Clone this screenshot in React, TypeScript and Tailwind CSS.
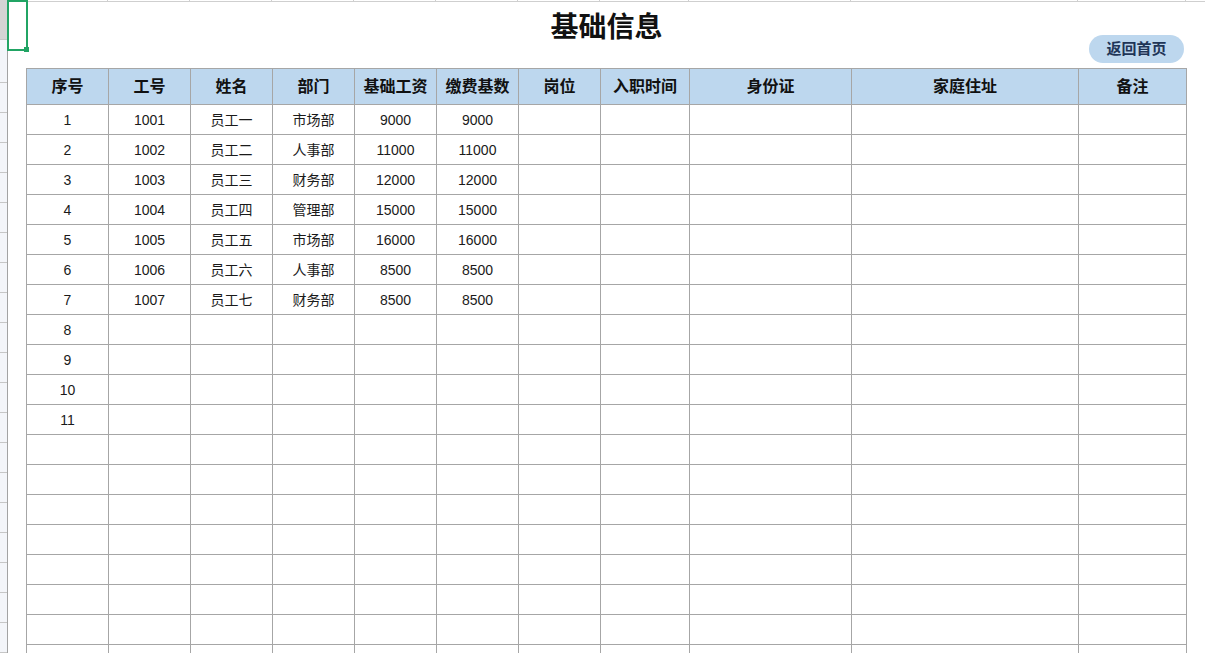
import React from 'react';

const columns = [
  { title: '序号', width: 82 },
  { title: '工号', width: 82 },
  { title: '姓名', width: 82 },
  { title: '部门', width: 82 },
  { title: '基础工资', width: 82 },
  { title: '缴费基数', width: 82 },
  { title: '岗位', width: 82 },
  { title: '入职时间', width: 89 },
  { title: '身份证', width: 162 },
  { title: '家庭住址', width: 227 },
  { title: '备注', width: 108 },
];

const employees = [
  ['1', '1001', '员工一', '市场部', '9000', '9000'],
  ['2', '1002', '员工二', '人事部', '11000', '11000'],
  ['3', '1003', '员工三', '财务部', '12000', '12000'],
  ['4', '1004', '员工四', '管理部', '15000', '15000'],
  ['5', '1005', '员工五', '市场部', '16000', '16000'],
  ['6', '1006', '员工六', '人事部', '8500', '8500'],
  ['7', '1007', '员工七', '财务部', '8500', '8500'],
  ['8'],
  ['9'],
  ['10'],
  ['11'],
];

const TOTAL_ROWS = 19;

const font = { fontFamily: '"Liberation Sans", "Noto Sans CJK SC", sans-serif' };
const gridCols = 'grid grid-cols-[82px_82px_82px_82px_82px_82px_82px_89px_162px_227px_108px]';

function RowHeaders() {
  return (
    <div className="flex w-[8px] shrink-0 flex-col border-r border-[#a3a3a3] bg-[#f3f5f9]">
      <div className="h-[51px] border-b border-[#c6c6c6] bg-[#d4d4d4]" />
      <div className="h-[54px] border-b border-[#c6c6c6]" />
      {Array.from({ length: TOTAL_ROWS }).map((_, i) => (
        <div key={i} className="h-[30px] shrink-0 border-b border-[#c6c6c6]" />
      ))}
    </div>
  );
}

function SheetTicks() {
  return (
    <div className={`${gridCols} h-[2px] border-b border-[#cfcfcf]`}>
      {columns.map((c) => (
        <div key={c.title} className="border-r border-[#cfcfcf]" />
      ))}
    </div>
  );
}

function TitleBar() {
  return (
    <div className="grid h-[66px] grid-cols-[1fr_auto_1fr]">
      <div />
      <h1 className="mt-[12px] self-start text-[28px] font-bold leading-[28px] text-[#111]" style={font}>
        基础信息
      </h1>
      <button
        className="mb-[5px] mr-[3px] h-[28px] w-[95px] self-end justify-self-end rounded-full bg-[#bdd7ee] text-[15px] font-bold text-[#1f3557]"
        style={font}
      >
        返回首页
      </button>
    </div>
  );
}

function DataTable() {
  return (
    <div className="border-l border-t border-[#a6a6a6]" style={font}>
      <div className={`${gridCols} bg-[#bdd7ee]`}>
        {columns.map((c) => (
          <div
            key={c.title}
            className="flex h-[36px] items-center justify-center border-b border-r border-[#a6a6a6] pt-[1px] text-[16px] font-bold text-[#111]"
          >
            {c.title}
          </div>
        ))}
      </div>
      {Array.from({ length: TOTAL_ROWS }).map((_, r) => {
        const row = employees[r] ?? [];
        return (
          <div key={r} className={gridCols}>
            {columns.map((c, i) => (
              <div
                key={c.title}
                className="flex h-[30px] items-center justify-center border-b border-r border-[#a6a6a6] pt-[2px] text-[14px] text-[#1a1a1a]"
              >
                {row[i] ?? ''}
              </div>
            ))}
          </div>
        );
      })}
    </div>
  );
}

export default function App() {
  return (
    <div className="relative flex h-[653px] w-[1205px] overflow-hidden bg-white">
      <RowHeaders />
      <div className="w-[18px] shrink-0">
        <div className="h-[2px] border-b border-[#cfcfcf]" />
      </div>
      <div className="w-[1161px] shrink-0">
        <SheetTicks />
        <TitleBar />
        <DataTable />
      </div>
      <div className="flex-1">
        <div className="h-[2px] border-b border-[#cfcfcf]" />
      </div>

      {/* active cell selection */}
      <div className="absolute left-[7px] top-0 h-[51px] w-[21px] border-2 border-[#21a464]" />
      <div className="absolute left-[24px] top-[47px] h-[5px] w-[5px] bg-[#21a464]" />
    </div>
  );
}
